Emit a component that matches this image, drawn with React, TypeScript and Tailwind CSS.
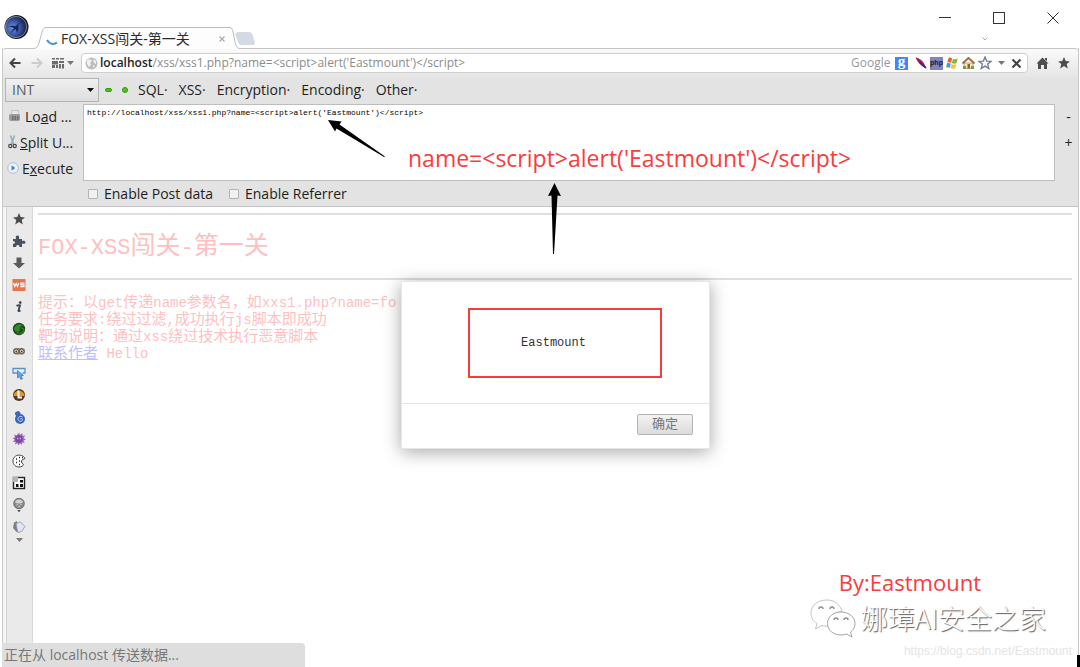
import React from "react";

const UI = "font-['Open_Sans','Noto_Sans_CJK_SC',sans-serif]";
const MONO = "font-['Liberation_Mono','Noto_Sans_CJK_SC',monospace]";

function Logo() {
  return (
    <svg width="26" height="26" viewBox="0 0 26 26" aria-hidden="true">
      <defs>
        <radialGradient id="orb" cx="35%" cy="55%" r="65%">
          <stop offset="0" stopColor="#6f8fe0" />
          <stop offset="0.5" stopColor="#3d57a8" />
          <stop offset="1" stopColor="#141c40" />
        </radialGradient>
      </defs>
      <circle cx="12.5" cy="13" r="12" fill="#15181f" />
      <circle cx="12" cy="13" r="10.6" fill="url(#orb)" stroke="#a3abbd" strokeWidth="0.7" />
      <path d="M19 7.500 C15 9 14 11 14.500 13 C14.800 15 14 17 12.800 19 C12.500 16.500 12 15.500 11.300 15 C9.500 16.500 8 18 6.500 20 C7.200 17.500 8.500 15.800 10 14.300 C9 13.300 7 12.800 4.500 12.800 C7 11.500 9.500 11.600 11.500 12.300 C13.500 10 16 8.300 19 7.500 Z" fill="#17235c" />
    </svg>
  );
}

function TitleBar() {
  return (
    <header className="flex h-12 items-end bg-white">
      <div className="flex h-full w-[34px] items-start pl-[4px] pt-[14px]">
        <Logo />
      </div>
      <div className="relative z-10 -mb-px flex h-[22px] items-stretch">
        <svg width="12" height="22" viewBox="0 0 12 22" aria-hidden="true">
          <path d="M0 21.5 C3 21 4 19 5 16 L8 5 C9 2 10 0.5 12 0.5 V22 H0 Z" fill="#fdfdfd" />
          <path d="M0 21.5 C3 21 4 19 5 16 L8 5 C9 2 10 0.5 12 0.5" fill="none" stroke="#bcbcbc" />
        </svg>
        <div className="flex w-[184px] items-center border-t border-[#bcbcbc] bg-[#fdfdfd]">
          <svg width="12" height="12" viewBox="0 0 12 12" className="shrink-0" aria-hidden="true">
            <path d="M1 7 C3 11 8 12 11 9.5" fill="none" stroke="#4a90d0" strokeWidth="2" />
          </svg>
          <h1 className="ml-[3px] grow whitespace-nowrap text-[14px] leading-5 text-[#2b2b2b]">FOX-XSS闯关-第一关</h1>
          <button type="button" aria-label="关闭标签页" className="mr-[3px] flex size-2 items-center">
            <svg width="6" height="6" viewBox="0 0 6 6">
              <path d="M0.5 0.5 L5.5 5.5 M5.5 0.5 L0.5 5.5" stroke="#aaa" strokeWidth="1.2" />
            </svg>
          </button>
        </div>
        <svg width="9" height="22" viewBox="0 0 9 22" aria-hidden="true">
          <path d="M0 0.5 C2 0.5 2.5 3 3 5 L5 15 C6 19 7 21 9 21.5 V22 H0 Z" fill="#fdfdfd" />
          <path d="M0 0.5 C2 0.5 2.5 3 3 5 L5 15 C6 19 7 21 9 21.5" fill="none" stroke="#bcbcbc" />
        </svg>
      </div>
      <button type="button" aria-label="新标签页" className="-ml-1 mb-[3px]">
        <svg width="20" height="13" viewBox="0 0 20 13">
          <path d="M2 0.5 H14 C16 0.5 17 2 17.5 4 L19.5 11 C19.5 12 19 12.5 18 12.5 H7 C4 12.5 3.500 11 3 9 L0.500 2 Z" fill="#d3dae3" stroke="#c8ced6" strokeWidth="0.6" />
        </svg>
      </button>
      <div className="ml-auto flex h-full flex-col">
        <div className="flex h-[35px] items-center text-[#333]">
          <button type="button" aria-label="最小化" className="flex h-full w-[54px] items-center justify-center">
            <svg width="12" height="12" viewBox="0 0 12 12"><path d="M0 5.500 H12" stroke="currentColor" /></svg>
          </button>
          <button type="button" aria-label="最大化" className="flex h-full w-[54px] items-center justify-center">
            <svg width="12" height="12" viewBox="0 0 12 12"><rect x="0.500" y="0.500" width="11" height="11" fill="none" stroke="currentColor" /></svg>
          </button>
          <button type="button" aria-label="关闭" className="flex h-full w-[54px] items-center justify-center">
            <svg width="12" height="12" viewBox="0 0 12 12"><path d="M0.500 0.500 L11.500 11.500 M11.500 0.500 L0.500 11.500" stroke="currentColor" /></svg>
          </button>
        </div>
        <div className="flex h-2 items-center justify-center pr-[28px]">
          <svg width="6" height="4" viewBox="0 0 6 4" aria-hidden="true"><path d="M0.500 0.500 L3 3 L5.500 0.500" fill="none" stroke="#aaa" /></svg>
        </div>
      </div>
    </header>
  );
}

const Star = ({ outline = false }: { outline?: boolean }) => (
  <svg width="14" height="14" viewBox="0 0 14 14">
    <path
      d="M7 1 L8.700 5.100 L13 5.400 L9.700 8.100 L10.800 12.500 L7 10.100 L3.200 12.500 L4.300 8.100 L1 5.400 L5.300 5.100 Z"
      fill={outline ? "#f3f6fb" : "#4d4d4d"}
      stroke={outline ? "#6c7a96" : "none"}
      strokeWidth="1.300"
    />
  </svg>
);

const Caret = ({ color = "#777" }: { color?: string }) => (
  <svg width="7" height="4" viewBox="0 0 7 4" aria-hidden="true"><path d="M0 0 H7 L3.500 4 Z" fill={color} /></svg>
);

function NavBar() {
  return (
    <nav className="flex h-[29px] items-center rounded-t-[3px] border-t border-[#c4c4c4] bg-linear-to-b from-[#fafafa] to-[#e6e6e6] pl-[6px] pr-[7px]">
      <button type="button" aria-label="后退" className="mr-[10px]">
        <svg width="12" height="12" viewBox="0 0 12 12"><path d="M6 1.500 L1.500 6 L6 10.500 M1.500 6 H11.500" fill="none" stroke="#444" strokeWidth="2" /></svg>
      </button>
      <button type="button" aria-label="前进" className="mr-[9px]">
        <svg width="12" height="12" viewBox="0 0 12 12"><path d="M6 1.500 L10.500 6 L6 10.500 M10.500 6 H0.500" fill="none" stroke="#cdcdcd" strokeWidth="2" /></svg>
      </button>
      <button type="button" aria-label="侧边栏" className="flex items-center gap-[3px]">
        <svg width="12" height="12" viewBox="0 0 12 12">
          <path d="M0 1 H3 V2.500 H0 Z M4 1 H7 V2.500 H4 Z M8 1 H12 V2.500 H8 Z M0 4 H6 V7.500 H0 Z M7 4 H12 V6 H7 Z M0 8 H3 V11 H0 Z M4 8 H6 V11 H4 Z M7 7 H9 V11.500 H7 Z M10 7 H12 V11.500 H10 Z" fill="#6b6b6b" />
        </svg>
        <Caret />
      </button>
      <div className="ml-[7px] flex h-[20px] grow items-center rounded-[4px] border border-[#cfcfcf] bg-white pl-[3px] pr-[5px] text-[12px]">
        <svg width="13" height="13" viewBox="0 0 13 13" aria-hidden="true">
          <circle cx="6.500" cy="6.500" r="6" fill="#bdbdbd" />
          <path d="M2 3 L5 2 L7 4 L5 6 L6 8 L4 10 L2 7 Z M8 2 L11 4 L11 7 L9 6 Z M8 8 L10 9 L8 11 Z" fill="#f2f2f2" />
        </svg>
        <label htmlFor="address" className="ml-[2px] font-semibold text-[#222]">localhost</label>
        <input id="address" defaultValue="/xss/xss1.php?name=<script>alert('Eastmount')</script>" className="min-w-0 grow text-[#8c8c8c] outline-none" />
        <input aria-label="Google 搜索" placeholder="Google" className="w-[43px] text-[#8c8c8c] outline-none placeholder:text-[#999]" />
        <button type="button" aria-label="Google" className="ml-px mt-px flex size-[13px] items-center justify-center bg-[#4285f4] pb-[5px] font-['Liberation_Serif',serif] text-[15px] font-bold leading-3 text-white">g</button>
        <div className="ml-[7px] flex items-center gap-[3px]">
          <button type="button" aria-label="Apache">
            <svg width="12" height="12" viewBox="0 0 12 12">
              <path d="M0.500 0.500 C5 1.500 8 4 9.500 7.500 L11.500 11.500 C7 10 3 6 0.500 0.500 Z" fill="#8b1a6e" />
              <path d="M1 1 C4 2 7 4 8.500 7" stroke="#d8203c" fill="none" />
              <path d="M5 5 L11 11" stroke="#4a1b8c" strokeWidth="1.500" />
            </svg>
          </button>
          <button type="button" aria-label="PHP" className="flex h-[13px] w-[13px] items-center justify-center bg-[#8383bd] font-['Liberation_Sans',sans-serif] text-[7px] font-bold leading-3 text-[#15153a]">php</button>
          <button type="button" aria-label="Windows">
            <svg width="12" height="12" viewBox="0 0 12 12">
              <path d="M2.500 1 C4 0 5 1 6.200 1.500 L5 6 C4 5 2.500 5 1.200 5.500 Z" fill="#e8622c" />
              <path d="M7 2 C8.500 2.500 10 2.300 11.700 1.500 L10.500 6 C9 7 7.500 6.800 5.800 6 Z" fill="#7bb942" />
              <path d="M1 6.300 C2.500 5.600 4 6 4.800 6.800 L3.600 11 C2.500 10 1 10.200 0 10.700 Z" fill="#4b94d8" />
              <path d="M5.600 7 C7 7.800 8.800 7.900 10.300 7 L9.200 11.300 C7.500 12 6 11.800 4.400 11 Z" fill="#f6c52c" />
            </svg>
          </button>
          <button type="button" aria-label="主页" className="ml-[1px]">
            <svg width="13" height="12" viewBox="0 0 13 12">
              <path d="M2 6 H11 V11.500 H2 Z" fill="#f5e6c4" stroke="#8b7350" strokeWidth="0.600" />
              <path d="M0.500 6.500 L6.500 1 L12.500 6.500" fill="none" stroke="#a5713d" strokeWidth="2" />
              <path d="M5.500 7 H8 V11.500 H5.500 Z" fill="#91602f" />
              <path d="M1 9 H4 V12 H1 Z M9 9 H12 V12 H9 Z" fill="#6fa342" />
            </svg>
          </button>
          <button type="button" aria-label="收藏"><Star outline /></button>
          <button type="button" aria-label="更多" className="mx-[3px]"><Caret /></button>
          <button type="button" aria-label="停止">
            <svg width="11" height="11" viewBox="0 0 11 11"><path d="M1.500 1.500 L9.500 9.500 M9.500 1.500 L1.500 9.500" stroke="#444" strokeWidth="2.200" /></svg>
          </button>
        </div>
      </div>
      <button type="button" aria-label="首页" className="ml-[8px] mr-[8px]">
        <svg width="13" height="12" viewBox="0 0 13 12"><path d="M6.500 0.500 L12.500 6.500 H11 V12 H8 V8 H5 V12 H2 V6.500 H0.500 Z M9 1 H11 V4 L9 2.500 Z" fill="#4d4d4d" /></svg>
      </button>
      <button type="button" aria-label="书签"><Star /></button>
    </nav>
  );
}

const actionIcons = {
  load: (
    <svg width="13" height="12" viewBox="0 0 13 12" aria-hidden="true">
      <path d="M4 0.500 H10 L11 5 H3 Z" fill="#e9e9e9" stroke="#aaa" strokeWidth="0.600" />
      <rect x="1" y="4" width="11" height="7" rx="2" fill="#9b9b9b" />
      <path d="M4 7 H11 M4 9 H11" stroke="#444" strokeWidth="1" strokeDasharray="1.500 1" />
    </svg>
  ),
  split: (
    <svg width="9" height="14" viewBox="0 0 9 14" aria-hidden="true">
      <path d="M2.500 0.500 L5.500 9 M6.500 0.500 L3.500 9" stroke="#8fb2bd" strokeWidth="1.700" />
      <circle cx="2.300" cy="11" r="1.600" fill="none" stroke="#444" strokeWidth="1.200" />
      <circle cx="6.700" cy="11" r="1.600" fill="none" stroke="#444" strokeWidth="1.200" />
    </svg>
  ),
  execute: (
    <svg width="12" height="12" viewBox="0 0 12 12" aria-hidden="true">
      <circle cx="6" cy="6" r="5.300" fill="#eef4fc" stroke="#a9bddb" />
      <path d="M4.500 3.300 L8.300 6 L4.500 8.700 Z" fill="#3f7fd0" />
    </svg>
  ),
};

function HackBar() {
  return (
    <section className="h-[130px] border-b border-[#c3c3c8] bg-[#e3e3e3] text-[14px] text-[#1e1e1e]">
      <div className="flex h-[25px] items-center pl-[2px]">
        <div className="relative">
          <select aria-label="INT" className="block h-6 w-[94px] appearance-none border border-[#b5b5b5] bg-linear-to-b from-[#f0f0f0] to-[#dedede] pl-[6px] text-[14px] leading-5 text-[#5a5a5a]">
            <option>INT</option>
          </select>
          <span className="pointer-events-none absolute right-[5px] top-[10px] flex"><Caret color="#111" /></span>
        </div>
        <button type="button" aria-label="减" className="ml-[6px] h-1 w-[7px] rounded-[2px] border border-[#2f9a12] bg-[#4fc41c]" />
        <button type="button" aria-label="加" className="ml-[10px] size-[6px] rounded-full border border-[#2f9a12] bg-[#4fc41c]" />
        <div className="ml-[10px] flex gap-[11px]">
          {["SQL", "XSS", "Encryption", "Encoding", "Other"].map((m) => (
            <button key={m} type="button" className="leading-5">{m}·</button>
          ))}
        </div>
      </div>
      <div className="flex pt-[1px]">
        <div className="flex w-[80px] shrink-0 flex-col">
          <button type="button" className="flex h-[26px] items-center gap-[4px] whitespace-nowrap pl-[5px]">{actionIcons.load}<span>Lo<u>a</u>d ...</span></button>
          <button type="button" className="flex h-[26px] items-center gap-[3px] whitespace-nowrap pl-[5px]">{actionIcons.split}<span><u>S</u>plit U...</span></button>
          <button type="button" className="flex h-[26px] items-center gap-[3px] whitespace-nowrap pl-[4px]">{actionIcons.execute}<span>E<u>x</u>ecute</span></button>
        </div>
        <textarea aria-label="URL" spellCheck={false} className={`${MONO} mt-px h-[77px] min-w-0 grow resize-none border border-[#bdbdbd] bg-white px-[3px] py-[2px] text-[8px] leading-3 text-black outline-none`} defaultValue="http://localhost/xss/xss1.php?name=<script>alert('Eastmount')</script>" />
        <div className="flex w-[23px] shrink-0 flex-col items-center pl-[4px]">
          <button type="button" className="h-[26px]">-</button>
          <button type="button" className="h-[26px]">+</button>
        </div>
      </div>
      <div className="flex h-[26px] items-center pl-[85px]">
        {["Enable Post data", "Enable Referrer"].map((t) => (
          <label key={t} className="mr-[16px] flex items-center gap-[6px] leading-5">
            <input type="checkbox" className="size-[10px] appearance-none rounded-[1px] border border-[#b3b3b3] bg-[#f1f1f1]" />
            {t}
          </label>
        ))}
      </div>
    </section>
  );
}

const tools: { name: string; icon: React.ReactNode }[] = [
  { name: "书签", icon: <Star /> },
  { name: "扩展", icon: <path d="M1 5 H4 C3.300 3 4 1.500 5.500 1.500 C7 1.500 7.500 3 7 5 H10 V7 C12 6.200 13.500 7 13.500 8.300 C13.500 9.700 12 10.300 10 9.500 V13 H7.500 C7.800 11.500 6.500 10.800 5.500 11 C4.500 11.200 4 12 4.300 13 H1 V9.700 C2.500 10 3.200 9.300 3 8.300 C2.800 7.500 2 7 1 7.500 Z" fill="#46525f" /> },
  { name: "下载", icon: <path d="M4.500 1.500 H9.500 V7 H13 L7 12.500 L1 7 H4.500 Z" fill="#5a5a5a" /> },
  { name: "WS", icon: <><rect x="0.500" y="1" width="13" height="12" fill="#e27650" /><path d="M1.500 5 L2.800 8.500 L4.200 5.500 L5.500 8.500 L6.800 5 M12.500 5.200 H9 V6.900 H12 V8.700 H8.300" fill="none" stroke="#fff" strokeWidth="1.200" /></> },
  { name: "信息", icon: <><circle cx="8.200" cy="2.600" r="1.400" fill="#3d4751" /><path d="M4.500 6 C6 5 7 5 8 5.300 L6.500 10.500 C6.300 11.500 7.500 11 8.500 10.500" fill="none" stroke="#3d4751" strokeWidth="1.900" /></> },
  { name: "代理", icon: <><circle cx="7" cy="7" r="6.200" fill="#21491f" /><path d="M2 6 C4 2 9 1 11 4 C8 4 7 6 8 9 C5 11 2 9 2 6 Z" fill="#2f8a2c" /><path d="M9 6 C11 6 12 7 12 9 C10 12 6 12 5 10" stroke="#2c7d2a" strokeWidth="1.500" fill="none" /></> },
  { name: "查找", icon: <><rect x="1" y="4" width="12" height="6.500" rx="3" fill="#8f8170" /><circle cx="4.300" cy="7.300" r="2.300" fill="#e8e0d2" stroke="#5e5243" /><circle cx="9.700" cy="7.300" r="2.300" fill="#e8e0d2" stroke="#5e5243" /><circle cx="4.300" cy="7.500" r="0.900" fill="#443a30" /><circle cx="9.700" cy="7.500" r="0.900" fill="#443a30" /></> },
  { name: "选择元素", icon: <><path d="M5 7 H1 V2.500 H13 V7 H10.500" fill="#e7f0fb" stroke="#5b8fd0" strokeWidth="1.300" /><path d="M5.500 4.500 L11.500 9.500 H9 L10.500 12.800 L8.800 13.500 L7.500 10.500 L5.500 12 Z" fill="#68a4e8" stroke="#3b74bd" strokeWidth="0.700" /></> },
  { name: "Live", icon: <><circle cx="7" cy="7" r="6" fill="#57351d" /><path d="M1.500 8 C2 1 12 1 12.500 8 Z" fill="#ec941f" /><path d="M6.500 2.500 V9.500 H10" fill="none" stroke="#fff" strokeWidth="2" /></> },
  { name: "海马", icon: <><path d="M3 3 C4 1 8 0.500 8.500 3 C9 5 5 5 5.500 7 L3 4.500 Z" fill="#3c67bd" /><circle cx="8" cy="9" r="5" fill="#3a63bb" /><path d="M10.500 7 C8.500 5.500 5.500 7 6 9.500 C6.500 12 10.500 12 10.500 9.500 C10.500 8.300 8.500 8 8.200 9.500" fill="none" stroke="#c9d8f6" strokeWidth="1" /></> },
  { name: "病毒", icon: <><path d="M7 0.500 L8 3 L10.500 1 L10.500 3.800 L13.300 3.500 L11.500 6 L13.800 7.500 L11.500 8.800 L12.800 11 L10.200 10.600 L10 13 L8 11.300 L6.500 13.500 L5.500 11.300 L3 12.600 L3.500 10 L0.800 9.800 L2.700 7.800 L0.500 6 L3 5.500 L2 2.500 L4.700 3.500 Z" fill="#a26bc0" /><circle cx="7" cy="7" r="3.800" fill="#7d479f" /><path d="M5 6.500 H6.300 M7.700 6.500 H9" stroke="#d4b5e6" strokeWidth="1.500" /></> },
  { name: "Cookie", icon: <><path d="M9.500 1.500 C5 0 0.800 3 1 7 C1 11 4 13 7 13 C9.500 13 11 12 11.500 10.500 L9.800 9 L9.500 7 L10.500 5.500 L13 4.500 C12.500 3 11 2 9.500 1.500 Z" fill="#fff" stroke="#444" /><path d="M4 5 H5 M7 3.500 H8 M4 8.500 H5 M7 7 H8 M7 10.500 H8 M10 3.500 H11" stroke="#222" strokeWidth="1.300" /></> },
  { name: "二维码", icon: <><rect x="1.500" y="1.500" width="11" height="11" fill="#fff" stroke="#222" strokeWidth="1.400" /><path d="M1 1 H6 V6 H1 Z" fill="#b5b5b5" /><path d="M8 4 H11 V6.500 H8 Z M4 8 H6.500 V11 H4 Z M8 8 H11 V11 H8 Z" fill="#111" /></> },
  { name: "脚本", icon: <><circle cx="7" cy="5.500" r="5.300" fill="#8c8c8c" stroke="#5e5e5e" strokeWidth="0.800" /><path d="M3 4 C4 0.500 10 0.500 11 4 C9 6 5 6 3 4 Z" fill="#d2d2d2" /><path d="M4.500 6.500 H6 M8 6.500 H9.500 M6 8.500 H8" stroke="#c9c9c9" strokeWidth="1.100" /><path d="M5.300 12.300 H8.700 L7 14 Z" fill="#222" /></> },
  { name: "标签", icon: <><path d="M2 2.500 L5 1 L7 11.500 L4.500 12 L1 8 Z" fill="#7b8189" /><path d="M4 3.500 L8.500 2 L13 6.500 L9.500 11.500 L5.800 12.500 Z" fill="#e3e5fa" stroke="#8b91a0" strokeWidth="0.800" /></> },
];

function SideBar() {
  return (
    <aside className="flex w-[30px] shrink-0 flex-col items-center border-r border-[#d9d9d9] bg-[#eaeaea] pl-[3px] pt-px shadow-[inset_3px_0_0_#f5f5f5,inset_4px_0_0_#d6d6d6]">
      {tools.map((t) => (
        <button key={t.name} type="button" aria-label={t.name} className="flex h-[22px] items-center justify-center">
          <svg width="14" height="14" viewBox="0 0 14 14">{t.icon}</svg>
        </button>
      ))}
      <Caret />
    </aside>
  );
}

function Mixed({ children, latin }: { children: string; latin: string }) {
  return (
    <>
      {children.split(/([\x20-\x7e]+)/).map((part, i) => (
        <span key={i} className={i % 2 ? latin : undefined}>{part}</span>
      ))}
    </>
  );
}

function Page() {
  return (
    <main className={`${MONO} relative min-w-0 grow pl-[5px] pr-[6px] text-[#ffbfbf]`}>
      <hr className="mt-[6px] border-t-2 border-[#e0e0e0]" />
      <h2 className="mt-[15px] whitespace-nowrap text-[25px] leading-9"><Mixed latin="text-[22px]">FOX-XSS闯关-第一关</Mixed></h2>
      <hr className="mt-[11px] border-t-2 border-[#e0e0e0]" />
      <div className="mt-[15px] whitespace-nowrap text-[15px] leading-[17px]">
        <p><Mixed latin="text-[14px]">提示：以get传递name参数名，如xxs1.php?name=fo</Mixed></p>
        <p><Mixed latin="text-[14px]">任务要求:绕过过滤,成功执行js脚本即成功</Mixed></p>
        <p><Mixed latin="text-[14px]">靶场说明：通过xss绕过技术执行恶意脚本</Mixed></p>
        <p><a href="#author" className="text-[#bfbfff] underline">联系作者</a><span className="text-[14px]"> Hello</span></p>
      </div>
      <div className="absolute inset-x-0 top-[74px] flex justify-center">
        <div role="alertdialog" aria-label="Eastmount" className="w-[309px] rounded-[2px] border border-[#e6e6e6] bg-white shadow-[0_3px_18px_rgba(0,0,0,0.35)]">
          <div className="flex h-[121px] items-center justify-center pl-[18px]">
            <p className="flex h-[70px] w-[194px] items-center justify-center border-2 border-[#f93b3b] pr-[22px] text-[12px] text-[#333]">Eastmount</p>
          </div>
          <div className="flex h-[45px] items-center justify-end border-t border-[#e3e3e8] pb-[3px] pr-[16px]">
            <button type="button" className="h-[21px] w-14 rounded-[2px] border border-[#b3b3b3] bg-linear-to-b from-[#f2f2f2] to-[#dcdcdc] text-[13px] leading-[18px] text-[#777]">确定</button>
          </div>
        </div>
      </div>
    </main>
  );
}

function Annotations() {
  return (
    <div className="pointer-events-none absolute inset-0 overflow-hidden">
      <p className="absolute left-[408px] top-[142px] whitespace-nowrap text-[23px] leading-8 text-[#fa3c3c]">name=&lt;script&gt;alert('Eastmount')&lt;/script&gt;</p>
      <svg className="absolute left-[328px] top-[120px]" width="58" height="38" viewBox="0 0 58 38">
        <path d="M0 0 L13.500 1.500 L11.500 4.500 L57 36.500 L56 37 L8.500 8.500 L7 11.500 Z" fill="#000" />
      </svg>
      <svg className="absolute left-[548px] top-[183px]" width="14" height="72" viewBox="0 0 14 72">
        <path d="M6.500 0 L13 13 L9.500 12.500 L6 71 H5 L3.500 12.500 L0 13 Z" fill="#000" />
      </svg>
      <div className="absolute bottom-0 right-0 flex flex-col items-end">
        <p className="mr-[99px] text-[22px] leading-8 text-[#fa3c3c]">By:Eastmount</p>
        <div className="mr-[34px] flex items-center gap-[5px]">
          <svg width="46" height="40" viewBox="0 0 46 40" fill="#fff" strokeWidth="1">
            <path d="M17 2 C7 2 1 8 1 15 C1 20 3 23 7 25.500 L5.500 31 L12 27.500 C14 28.200 17 28.500 19 28 C18 20 24 14 32 13.500 C30 6 24 2 17 2 Z" stroke="#c4c4c4" />
            <path d="M31 14 C23 14 17.500 19 17.500 25.500 C17.500 32 23 37 31 37 C33 37 35 36.500 36.500 36 L42 39 L40.500 34 C43.500 32 45 29 45 25.500 C45 19 39 14 31 14 Z" stroke="#a4a4a4" />
            <path d="M9 11 a2 2 0 0 1 4 0 M20 11 a2 2 0 0 1 4 0 M24 22 a1.800 1.800 0 0 1 4 0 M34 22 a1.800 1.800 0 0 1 4 0" fill="none" stroke="#8b8b8b" strokeWidth="1.400" />
          </svg>
          <span className="whitespace-nowrap font-['Noto_Sans_CJK_SC',sans-serif] text-[27px] font-light leading-10 text-white [text-shadow:1px_1px_1px_#555]">娜璋AI安全之家</span>
        </div>
        <p className="mr-2 pb-[3px] font-['Liberation_Sans',sans-serif] text-[12px] leading-[26px] text-[#e4e4e4]">https://blog.csdn.net/Eastmount</p>
      </div>
      <div className="absolute bottom-0 right-0 h-3 w-[3px] bg-black" />
    </div>
  );
}

export default function App() {
  return (
    <div className={`${UI} relative flex min-h-screen flex-col bg-white`}>
      <TitleBar />
      <div className="ml-[2px] mr-px flex grow flex-col border-x border-[#c9c9c9]">
        <NavBar />
        <HackBar />
        <div className="flex grow">
          <SideBar />
          <Page />
        </div>
      </div>
      <footer className="absolute bottom-0 left-[2px] h-6 w-[303px] rounded-tr-[4px] bg-[#dedede] pl-[2px] text-[14px] leading-6 text-[#777]">正在从 localhost 传送数据...</footer>
      <Annotations />
    </div>
  );
}
